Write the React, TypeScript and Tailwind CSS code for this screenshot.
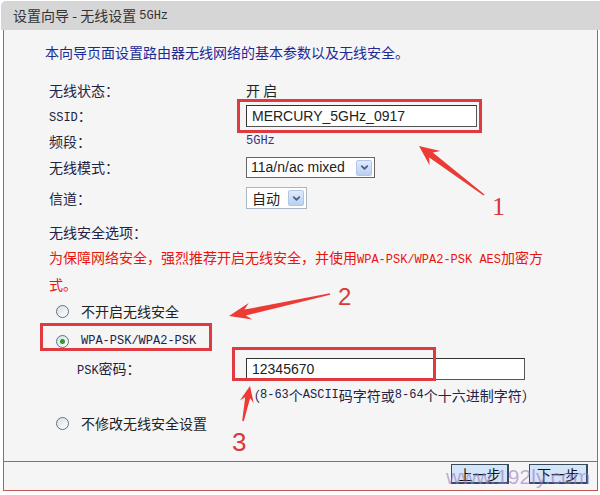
import React from 'react';
import { ChevronDown } from 'lucide-react';

type Pt = [number, number];

// tapered annotation arrow: wide head at the tip, thin tail
function arrowPoints(tip: Pt, tail: Pt, hl: number, hw: number, sw: number, tw: number) {
  const dx = tail[0] - tip[0];
  const dy = tail[1] - tip[1];
  const len = Math.hypot(dx, dy);
  const ux = dx / len, uy = dy / len;
  const nx = -uy, ny = ux;
  const bx = tip[0] + ux * hl, by = tip[1] + uy * hl;
  const kx = tip[0] + ux * hl * 0.75, ky = tip[1] + uy * hl * 0.75;
  const pts: Pt[] = [
    tip,
    [bx + nx * hw, by + ny * hw],
    [kx + nx * sw, ky + ny * sw],
    [tail[0] + nx * tw, tail[1] + ny * tw],
    [tail[0] - nx * tw, tail[1] - ny * tw],
    [kx - nx * sw, ky - ny * sw],
    [bx - nx * hw, by - ny * hw],
  ];
  return pts.map((p) => `${p[0].toFixed(1)},${p[1].toFixed(1)}`).join(' ');
}

const M: React.FC<{ children: React.ReactNode; className?: string }> = ({ children, className }) => (
  <span className={`font-['Liberation_Mono','DejaVu_Sans_Mono',monospace] text-[12px] ${className ?? ''}`}>{children}</span>
);

const Radio: React.FC<{ checked?: boolean }> = ({ checked }) => (
  <span className="w-[13px] h-[13px] rounded-full border border-[#5b7486] bg-gradient-to-br from-[#d9dde2] to-white flex items-center justify-center shrink-0">
    {checked && <span className="w-[5px] h-[5px] rounded-full bg-[#2f9a2f]" />}
  </span>
);

const Row: React.FC<{ label: React.ReactNode; className: string; children?: React.ReactNode }> = ({ label, className, children }) => (
  <div className={`flex items-center pl-[4px] ${className}`}>
    <div className="w-[197px] text-[#222244]">{label}</div>
    <div className="flex items-center">{children}</div>
  </div>
);

const DropButton = () => (
  <span className="w-[16px] h-[16px] mr-[2px] rounded-[2px] border border-[#b3c6e8] bg-gradient-to-b from-[#e1ebfb] to-[#b9cff3] flex items-center justify-center">
    <ChevronDown size={11} strokeWidth={4} color="#4a5f8c" />
  </span>
);

export default function App() {
  return (
    <div className="relative w-[600px] h-[495px] bg-white overflow-hidden font-['Noto_Sans_CJK_SC',sans-serif] text-[14px] text-[#222]">
      {/* title bar */}
      <div className="mt-px ml-px h-[29px] rounded-tl-[5px] bg-[#d6d6d6] flex items-center pl-[12px] text-[#333]">
        设置向导 - 无线设置&nbsp;<M className="text-[11px]">5GHz</M>
      </div>

      {/* panel */}
      <div className="ml-[3px] mr-[2px] border-x border-b border-[#c65656] bg-[#f5f5f5]">
        <div className="h-[431px] pl-[41px] flex flex-col">
          <div className="mt-[11px] h-[22px] flex items-center text-[#1c2a96]">
            本向导页面设置路由器无线网络的基本参数以及无线安全。
          </div>

          <Row label="无线状态：" className="mt-[16px] h-[22px]">
            <span className="pl-[-2px]">开 启</span>
          </Row>

          <Row label={<><M>SSID</M>：</>} className="mt-[4px] h-[22px]">
            <div className="w-[231px] h-[22px] bg-white border border-[#555] border-t-[#333] border-l-[#333] flex items-center pl-[5px] font-['Liberation_Sans',sans-serif] text-[14px] text-[#222]">
              MERCURY_5GHz_0917
            </div>
          </Row>

          <Row label="频段：" className="mt-[4px] h-[20px]">
            <M className="text-[11px] text-[#33338a]">5GHz</M>
          </Row>

          <Row label="无线模式：" className="mt-[6px] h-[21px]">
            <div className="w-[129px] h-[21px] bg-white border border-[#666] flex items-center justify-between pl-[4px] font-['Liberation_Sans',sans-serif] text-[14px] text-[#222]">
              11a/n/ac mixed
              <DropButton />
            </div>
          </Row>

          <Row label="信道：" className="mt-[9px] h-[22px]">
            <div className="w-[61px] h-[22px] bg-white border border-[#a9b6c6] flex items-center justify-between pl-[5px] text-[14px] text-[#222]">
              自动
              <DropButton />
            </div>
          </Row>

          <div className="mt-[12px] h-[22px] pl-[4px] flex items-center text-[#222244]">无线安全选项：</div>

          <p className="mt-[2px] pl-[4px] w-[504px] leading-[24px] text-[#e8140e]">
            为保障网络安全，强烈推荐开启无线安全，并使用<M>WPA-PSK/WPA2-PSK AES</M>加密方式。
          </p>

          <div className="mt-[4px] h-[22px] pl-[11px] flex items-center gap-[12px] text-[#222]">
            <Radio />
            不开启无线安全
          </div>

          <div className="mt-[8px] h-[22px] pl-[11px] flex items-center gap-[12px] text-[#222244]">
            <Radio checked />
            <M>WPA-PSK/WPA2-PSK</M>
          </div>

          <div className="mt-[6px] h-[22px] pl-[32px] flex items-center text-[#222244]">
            <div className="w-[169px]"><M>PSK</M>密码：</div>
            <div className="w-[279px] h-[22px] bg-white border border-[#555] border-t-[#333] border-l-[#333] flex items-center pl-[5px] font-['Liberation_Sans',sans-serif] text-[14px] text-[#222]">
              12345670
            </div>
          </div>

          <div className="mt-[4px] h-[22px] pl-[201px] flex items-center text-[#222244]">
            （<M>8-63</M>个<M>ASCII</M>码字符或<M>8-64</M>个十六进制字符）
          </div>

          <div className="mt-[6px] h-[22px] pl-[11px] flex items-center gap-[12px] text-[#222]">
            <Radio />
            不修改无线安全设置
          </div>
        </div>

        {/* footer */}
        <div className="h-[29px] border-t border-[#c65656] flex justify-end items-start pt-[2px] pr-[9px] gap-[20px]">
          <button className="w-[58px] h-[20px] bg-[#d3e5f8] border border-[#394a5c] border-b-2 border-r-2 text-[14px] leading-none text-[#111] flex items-center justify-center">上一步</button>
          <button className="w-[59px] h-[20px] bg-[#d3e5f8] border border-[#394a5c] border-b-2 border-r-2 text-[14px] leading-none text-[#111] flex items-center justify-center">下一步</button>
        </div>
      </div>

      {/* annotation boxes */}
      <div className="absolute left-[237px] top-[99px] w-[245px] h-[34px] border-[3px] border-[#de3a3f] pointer-events-none" />
      <div className="absolute left-[40px] top-[323px] w-[172px] h-[28px] border-[3px] border-[#de3a3f] pointer-events-none" />
      <div className="absolute left-[232px] top-[347px] w-[204px] h-[34px] border-[3px] border-[#de3a3f] pointer-events-none" />

      {/* annotation arrows and numbers */}
      <svg className="absolute inset-0 pointer-events-none" width="600" height="495">
        <polygon points={arrowPoints([419, 146], [484, 195], 20, 9, 3, 0.8)} fill="#ec3b35" />
        <polygon points={arrowPoints([229, 316], [330, 294], 22, 8.5, 3, 0.8)} fill="#ec3b35" />
        <polygon points={arrowPoints([250, 386], [243, 421], 16, 7, 2.5, 0.8)} fill="#ec3b35" />
      </svg>
      <span className="absolute left-[492px] top-[194px] font-['Liberation_Serif',serif] text-[26px] leading-none text-[#d13a3a]">1</span>
      <span className="absolute left-[338px] top-[285px] font-['Liberation_Sans',sans-serif] text-[24px] leading-none text-[#d8383a]">2</span>
      <span className="absolute left-[232px] top-[429px] font-['Liberation_Sans',sans-serif] text-[26px] leading-none text-[#d8383a]">3</span>

      {/* watermark */}
      <span className="absolute left-[446px] top-[466px] font-['Liberation_Sans',sans-serif] text-[21px] leading-none text-[#9a78c0]/60 pointer-events-none">www.192ly.com</span>
    </div>
  );
}
